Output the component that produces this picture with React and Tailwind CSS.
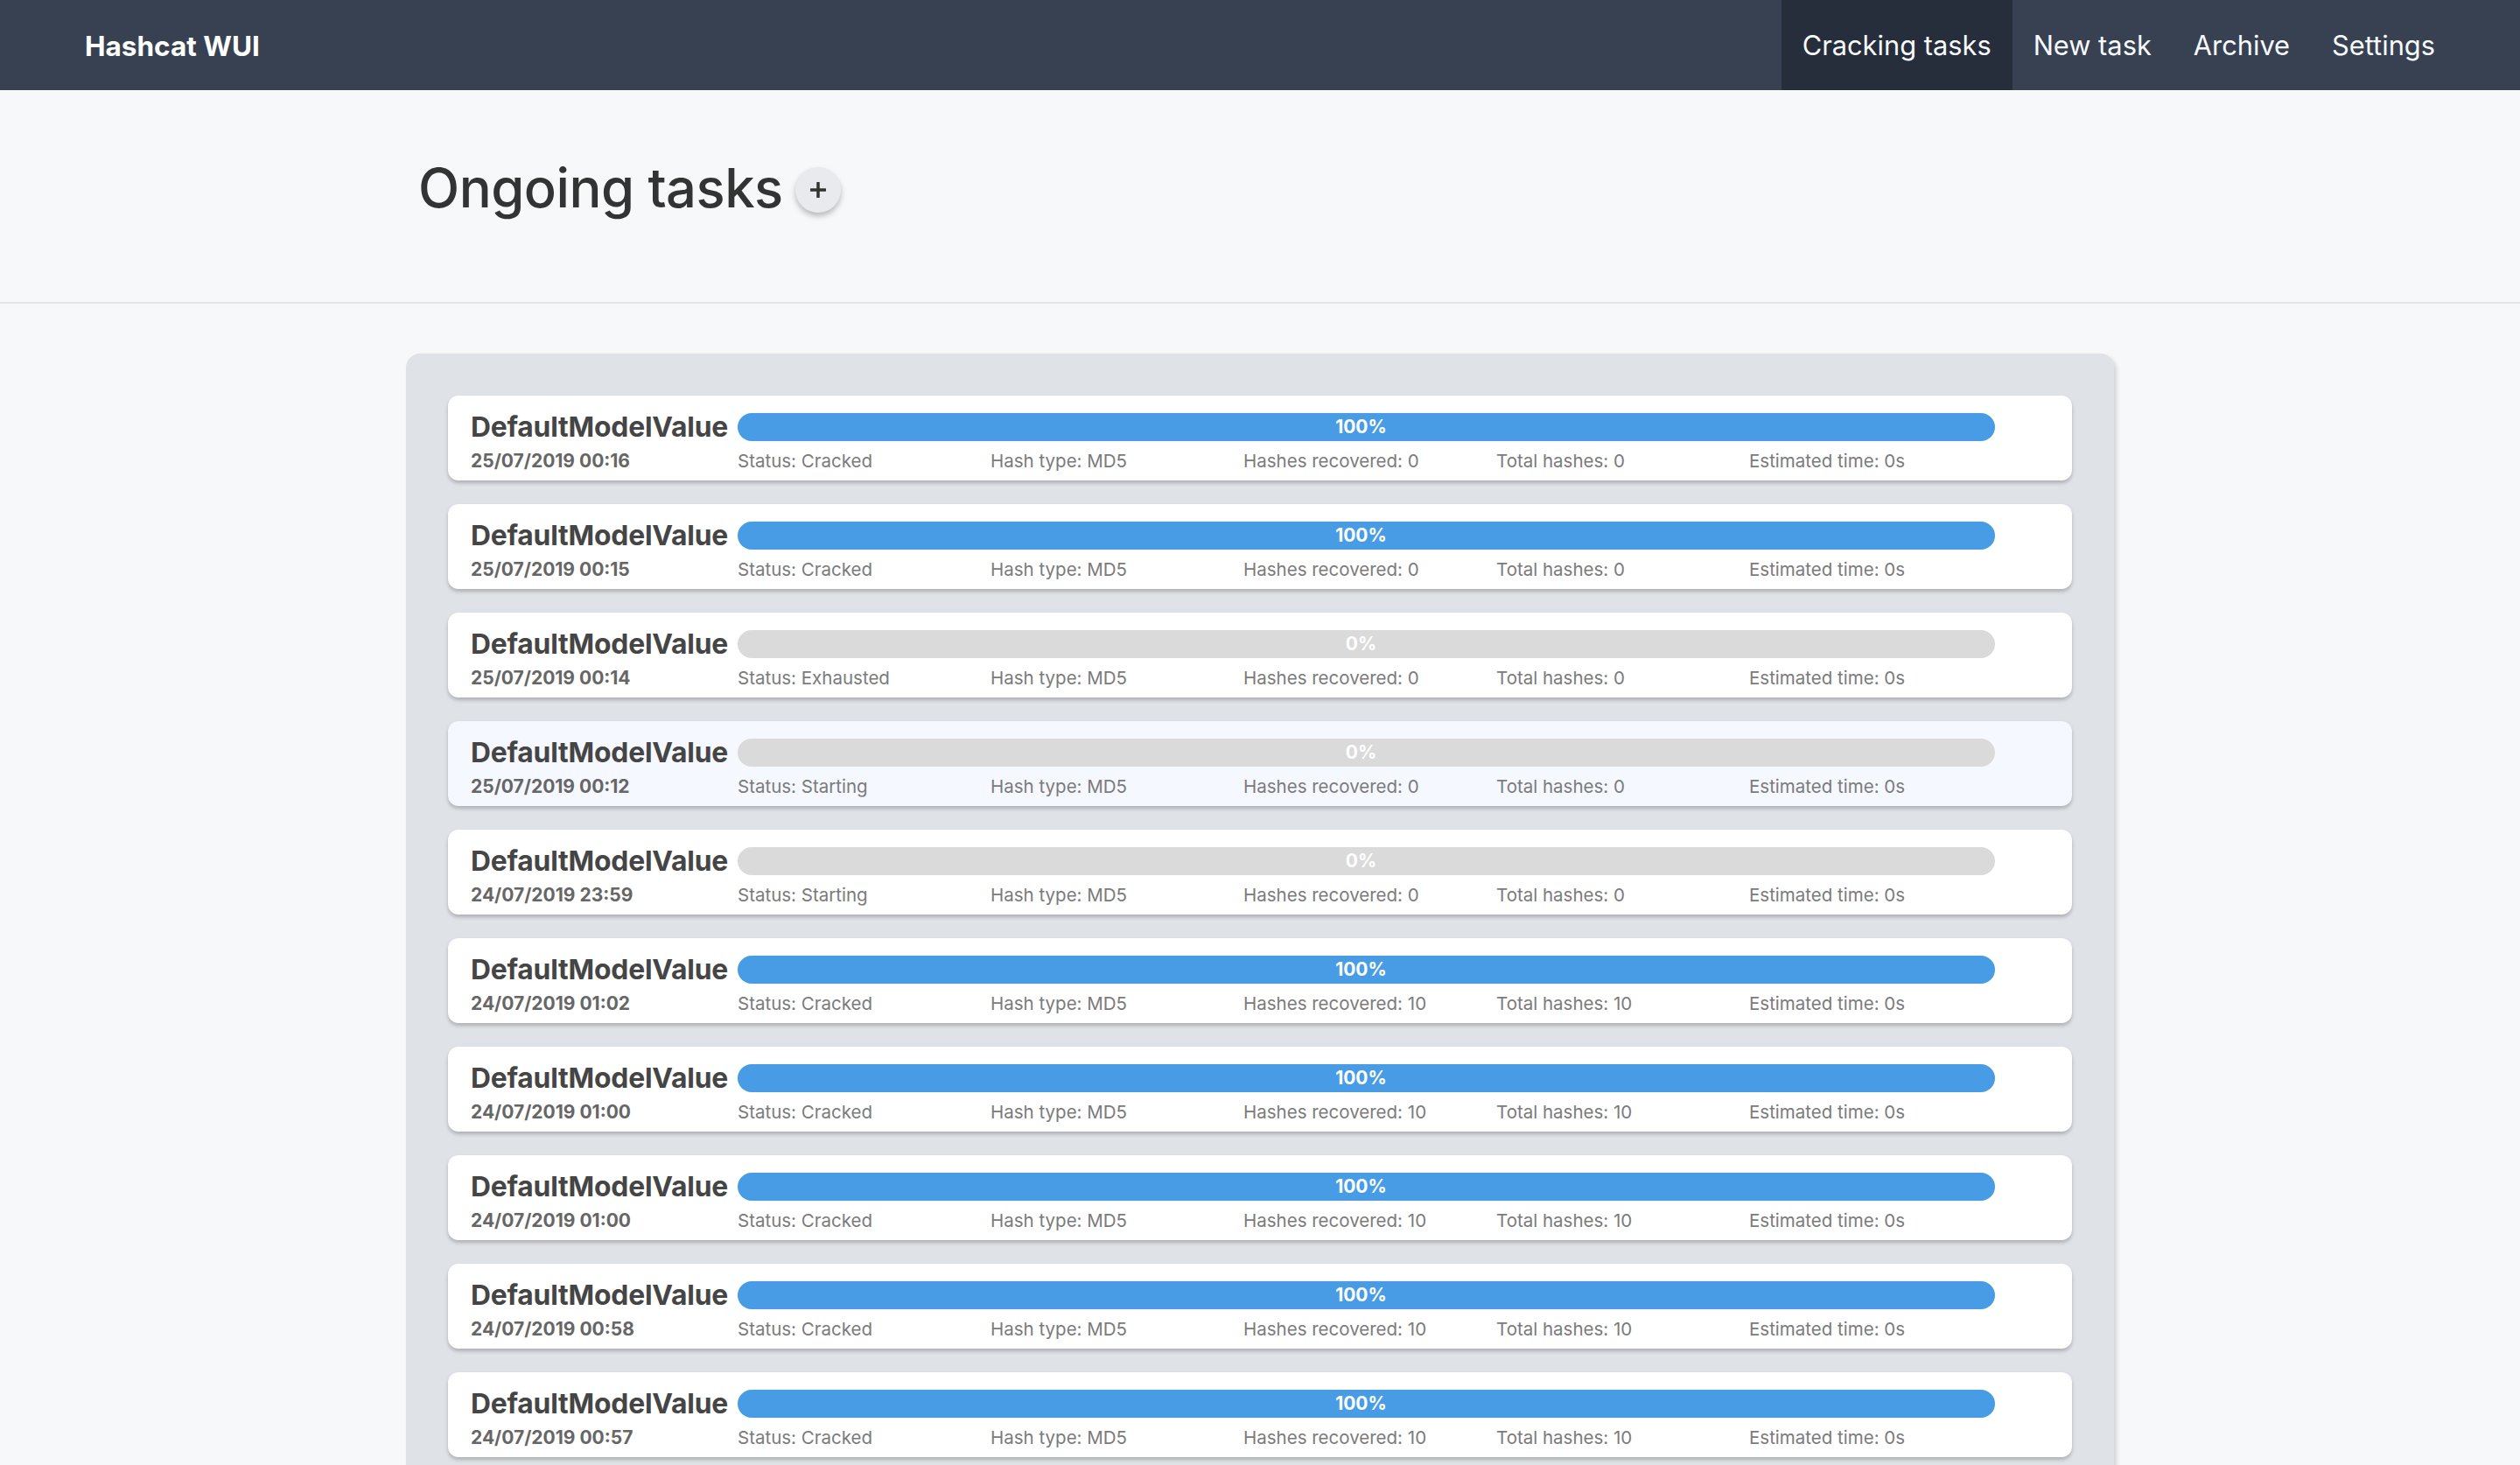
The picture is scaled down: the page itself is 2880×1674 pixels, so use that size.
const TASKS = [
  { date: '25/07/2019 00:16', status: 'Cracked', progress: 100, recovered: 0, total: 0 },
  { date: '25/07/2019 00:15', status: 'Cracked', progress: 100, recovered: 0, total: 0 },
  { date: '25/07/2019 00:14', status: 'Exhausted', progress: 0, recovered: 0, total: 0 },
  { date: '25/07/2019 00:12', status: 'Starting', progress: 0, recovered: 0, total: 0, hover: true },
  { date: '24/07/2019 23:59', status: 'Starting', progress: 0, recovered: 0, total: 0 },
  { date: '24/07/2019 01:02', status: 'Cracked', progress: 100, recovered: 10, total: 10 },
  { date: '24/07/2019 01:00', status: 'Cracked', progress: 100, recovered: 10, total: 10 },
  { date: '24/07/2019 01:00', status: 'Cracked', progress: 100, recovered: 10, total: 10 },
  { date: '24/07/2019 00:58', status: 'Cracked', progress: 100, recovered: 10, total: 10 },
  { date: '24/07/2019 00:57', status: 'Cracked', progress: 100, recovered: 10, total: 10 },
]

const NAV = ['Cracking tasks', 'New task', 'Archive', 'Settings']

function TaskCard({ task }) {
  const done = task.progress === 100
  return (
    <div className={`rounded-[12px] pl-[26px] pt-[20px] pb-[8px] shadow-[0_3px_4px_rgba(0,0,0,0.22)] ${task.hover ? 'bg-[#f5f8fe]' : 'bg-white'}`}>
      <div className="flex items-center h-[32px]">
        <h3 className="w-[305px] shrink-0 text-[31.8px] font-bold leading-none tracking-[-0.2px] text-[#454545]">DefaultModelValue</h3>
        <div className={`w-[1437px] h-[32px] rounded-full flex items-center justify-center pr-[12px] ${done ? 'bg-[#479ce5]' : 'bg-[#dadada]'}`}>
          <span className="text-[21px] font-bold text-white">{task.progress}%</span>
        </div>
      </div>
      <div className="flex items-center mt-[9px] h-[28px]">
        <span className="w-[305px] shrink-0 text-[21px] font-bold text-[#666]">{task.date}</span>
        <div className="grid grid-cols-5 w-[1445px] text-[20.5px] text-[#7b7b7b]">
          <span>Status: {task.status}</span>
          <span>Hash type: MD5</span>
          <span>Hashes recovered: {task.recovered}</span>
          <span>Total hashes: {task.total}</span>
          <span>Estimated time: 0s</span>
        </div>
      </div>
    </div>
  )
}

export default function App() {
  return (
    <div className="min-h-screen bg-[#f7f8fa] font-['Inter',sans-serif]">
      {/* top bar */}
      <nav className="h-[103px] bg-[#374151] flex items-center justify-between pl-[97px] pr-[73px]">
        <span className="text-[31.5px] font-bold text-white pt-[2px]">Hashcat WUI</span>
        <div className="flex h-full">
          {NAV.map((item, i) => (
            <a key={item} className={`flex items-center px-[24px] pt-[2px] text-[30.8px] text-[#f7fafc] ${i === 0 ? 'bg-[#262d3b]' : ''}`}>
              {item}
            </a>
          ))}
        </div>
      </nav>

      <header className="h-[244px] border-b-2 border-[#e2e6ec] flex items-center">
        <div className="w-[1952px] mx-auto pl-[14px] flex items-center gap-[14px] pb-[18px]">
          <h1 className="text-[61.5px] font-medium text-[#333] tracking-[-0.5px]">Ongoing tasks</h1>
          <button className="w-[52px] h-[52px] rounded-full bg-[#e8eaed] shadow-[0_4px_6px_rgba(0,0,0,0.25)] flex items-center justify-center mt-[4px]">
            <svg width="18" height="18" viewBox="0 0 18 18">
              <path d="M9 1v16M1 9h16" stroke="#333" strokeWidth="3.5" strokeLinecap="round" />
            </svg>
          </button>
        </div>
      </header>

      <main className="pt-[57px]">
        <div className="w-[1952px] mx-auto bg-[#dfe2e7] rounded-[16px] shadow-[3px_3px_5px_rgba(0,0,0,0.15)] pl-[48px] pr-[48px] py-[48px] flex flex-col gap-[27px]">
          {TASKS.map((t, i) => (
            <TaskCard key={i} task={t} />
          ))}
        </div>
      </main>
    </div>
  )
}
